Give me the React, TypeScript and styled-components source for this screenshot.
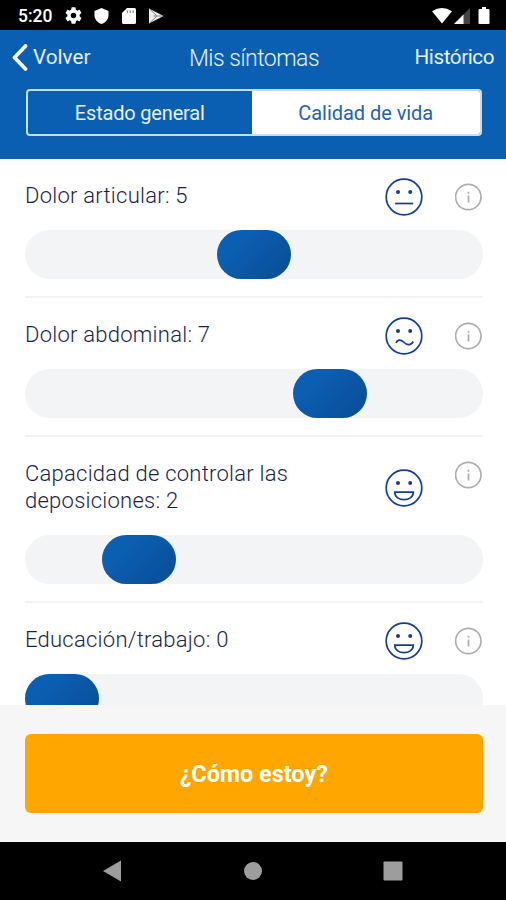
import React from 'react';
import styled, { createGlobalStyle } from 'styled-components';

const GlobalStyle = createGlobalStyle`
  * { box-sizing: border-box; }
  body { margin: 0; background: #000; font-family: Roboto, sans-serif; }
  button { font-family: inherit; border: 0; padding: 0; background: none; }
`;

const Screen = styled.div`
  display: flex;
  flex-direction: column;
  width: 506px;
  height: 900px;
  overflow: hidden;
  background: #fff;
`;

const StatusBar = styled.div`
  display: flex;
  align-items: center;
  flex: none;
  height: 30px;
  padding: 1px 15px 0 18px;
  background: #000;
  color: #fff;
`;

const Clock = styled.span`
  width: 47px;
  font-size: 17.5px;
  font-weight: 500;
  line-height: 20px;
`;

const StatusIcons = styled.div`
  display: flex;
  align-items: center;
  flex: 1;
`;

const StatusGlyph = styled.svg<{ $gap: number }>`
  display: block;
  flex: none;
  margin-right: ${(p) => p.$gap}px;
  fill: currentColor;
`;

const Header = styled.header`
  flex: none;
  height: 129px;
  padding: 0 12px;
  background: #0b5fb2;
  color: #e9f0fb;
`;

const TitleBar = styled.div`
  display: grid;
  grid-template-columns: 1fr auto 1fr;
  align-items: center;
  height: 59px;
  padding-bottom: 6px;
`;

const NavAction = styled.button<{ $end?: boolean }>`
  display: flex;
  align-items: center;
  gap: 5px;
  justify-self: ${(p) => (p.$end ? 'end' : 'start')};
  color: inherit;
  font-size: 20.7px;
  line-height: 26px;
  letter-spacing: ${(p) => (p.$end ? '-0.45px' : '0')};
`;

const Chevron = styled.svg`
  display: block;
  margin-top: 2px;
`;

const Title = styled.h1`
  margin: 4px 0 0 2px;
  font-size: 23px;
  font-weight: 300;
  line-height: 28px;
  letter-spacing: -0.5px;
`;

const Segments = styled.div`
  display: grid;
  grid-template-columns: 223.5px 1fr;
  height: 47px;
  margin: 0 12px 0 14px;
  overflow: hidden;
  border: 2px solid #c9dcf1;
  border-radius: 4px;
`;

const Segment = styled.button<{ $active?: boolean }>`
  padding-top: 1px;
  background: ${(p) => (p.$active ? '#fff' : 'transparent')};
  color: ${(p) => (p.$active ? '#2162b3' : '#e9f0fb')};
  font-size: 20px;
  line-height: 26px;
  letter-spacing: ${(p) => (p.$active ? '-0.05px' : '-0.18px')};
`;

const SymptomList = styled.main`
  flex: none;
  height: 546px;
  padding: 0 23.5px 0 25px;
  overflow: hidden;
`;

const Symptom = styled.section`
  padding: 19px 0 17px;
  border-bottom: 2px solid #f3f3f4;
`;

const SymptomHead = styled.div`
  display: grid;
  grid-template-columns: 1fr 38px 27px;
  column-gap: 32.5px;
  align-items: center;
  padding-right: 0.5px;
`;

const SymptomName = styled.h2`
  margin: 0;
  padding: 4px 0 6.5px;
  color: #1b1f49;
  font-size: 22px;
  font-weight: 300;
  line-height: 27px;
  letter-spacing: 0.25px;
  white-space: pre;
`;

const FaceIcon = styled.svg`
  display: block;
  fill: none;
  stroke: #143d98;
  stroke-width: 1.7;
`;

const InfoIcon = styled.svg`
  display: block;
  align-self: start;
  margin-top: 5px;
  fill: none;
  stroke: #adadad;
  stroke-width: 1.7;
`;

const Track = styled.div`
  height: 49px;
  margin-top: 14px;
  border-radius: 25px;
  background: #f2f4f5;
`;

const Thumb = styled.div<{ $value: number }>`
  width: 74px;
  height: 49px;
  margin-left: ${(p) => p.$value * 38.35}px;
  border-radius: 25px;
  background: linear-gradient(135deg, #0b5fb3 25%, #0a509a 85%);
`;

const Footer = styled.footer`
  flex: none;
  height: 137px;
  padding: 29px 23.5px 0 25px;
  background: #f6f6f6;
`;

const PrimaryButton = styled.button`
  display: block;
  width: 100%;
  height: 79px;
  padding-top: 1px;
  border-radius: 6px;
  background: #ffa600;
  color: #fff;
  font-size: 23.4px;
  font-weight: 700;
`;

const SystemNav = styled.nav`
  display: flex;
  justify-content: space-between;
  align-items: center;
  flex: none;
  height: 58px;
  padding: 0 103px;
  background: #000;
`;

const SystemGlyph = styled.svg`
  display: block;
  fill: #9d9d9d;
`;

type Mood = 'neutral' | 'uneasy' | 'happy';

const mouths: Record<Mood, string> = {
  neutral: 'M10.2 25.5H28.2',
  uneasy: 'M11 26C12.5 22 16 22.5 18.5 25C22 28.5 26 28.5 28.3 24.5',
  happy: 'M9.8 23.2H28.3C28.3 33.2 9.8 33.2 9.8 23.2Z',
};

function Face({ mood }: { mood: Mood }) {
  return (
    <FaceIcon width="38" height="38" viewBox="0 0 38 38">
      <circle cx="19" cy="19" r="17.8" />
      <path d={mouths[mood]} />
      <g fill="#143d98" stroke="none">
        <circle cx="13" cy="14" r="2" />
        <circle cx="25.2" cy="14" r="2" />
      </g>
    </FaceIcon>
  );
}

function Info() {
  return (
    <InfoIcon width="27" height="28" viewBox="0 0 27 28">
      <circle cx="13.3" cy="14" r="12.7" />
      <path d="M13.5 12.5V19.5M13.5 8.8V10.8" />
    </InfoIcon>
  );
}

const symptoms: { name: string; value: number; mood: Mood }[] = [
  { name: 'Dolor articular', value: 5, mood: 'neutral' },
  { name: 'Dolor abdominal', value: 7, mood: 'uneasy' },
  { name: 'Capacidad de controlar las\ndeposiciones', value: 2, mood: 'happy' },
  { name: 'Educación/trabajo', value: 0, mood: 'happy' },
];

export default function App() {
  return (
    <>
      <GlobalStyle />
      <Screen>
        <StatusBar>
          <Clock>5:20</Clock>
          <StatusIcons>
            <StatusGlyph $gap={12} width="17" height="17" viewBox="2 2 20 20">
              <path d="M19.14 12.94c.04-.3.06-.61.06-.94s-.02-.64-.07-.94l2.03-1.58a.49.49 0 0 0 .12-.61l-1.92-3.32a.49.49 0 0 0-.59-.22l-2.39.96a7 7 0 0 0-1.62-.94l-.36-2.54A.48.48 0 0 0 13.92 2.4h-3.84a.47.47 0 0 0-.47.41l-.36 2.54c-.59.24-1.13.57-1.62.94l-2.39-.96a.47.47 0 0 0-.59.22L2.74 8.87a.47.47 0 0 0 .12.61l2.03 1.58a7 7 0 0 0 0 1.88l-2.03 1.58a.49.49 0 0 0-.12.61l1.92 3.32c.12.22.37.29.59.22l2.39-.96c.5.38 1.03.7 1.62.94l.36 2.54c.05.24.24.41.48.41h3.84c.24 0 .44-.17.47-.41l.36-2.54a7 7 0 0 0 1.62-.94l2.39.96c.22.08.47 0 .59-.22l1.92-3.32a.47.47 0 0 0-.12-.61zM12 15.2A3.2 3.2 0 1 1 12 8.8a3.2 3.2 0 0 1 0 6.4z" />
            </StatusGlyph>
            <StatusGlyph $gap={13} width="15" height="16" viewBox="0 0 15 16">
              <path d="M7.5 0 14.5 3V7C14.5 11.5 11.5 14.8 7.5 16 3.5 14.8.5 11.5.5 7V3Z" />
            </StatusGlyph>
            <StatusGlyph $gap={12} width="14" height="16" viewBox="0 0 14 16">
              <path d="M5 0H12.5Q14 0 14 1.5V14.5Q14 16 12.5 16H1.5Q0 16 0 14.5V5Z" />
              <path d="M5.4 2.5V5M8.3 2.5V5M11.2 2.5V5" stroke="#888" strokeWidth="1.2" />
            </StatusGlyph>
            <StatusGlyph $gap={0} width="16" height="16" viewBox="0 0 16 16">
              <path d="M1 .5 15.5 8 1 15.5Z" fill="#eee" />
              <path d="M1.5 1 9 8 1.5 15M5.5 8H15" stroke="#777" strokeWidth=".9" fill="none" />
            </StatusGlyph>
          </StatusIcons>
          <StatusGlyph $gap={2} width="20" height="16" viewBox="0 0 20 16">
            <path d="M0 3.3Q10-3.3 20 3.3L10 15.5Z" />
          </StatusGlyph>
          <StatusGlyph $gap={8} width="16" height="16" viewBox="0 0 16 16">
            <path d="M0 16 16 0V16Z" fill="#444" />
            <path d="M0 16 9.5 6.5V16Z" />
          </StatusGlyph>
          <StatusGlyph $gap={1} width="12" height="17" viewBox="0 0 12 17">
            <path d="M4 0H8V2H10.5Q11.5 2 11.5 3V16Q11.5 17 10.5 17H1.5Q.5 17 .5 16V3Q.5 2 1.5 2H4Z" />
          </StatusGlyph>
        </StatusBar>

        <Header>
          <TitleBar>
            <NavAction>
              <Chevron width="16" height="27" viewBox="0 0 16 27">
                <path d="M13.5 2 2.5 13.5 13.5 25" fill="none" stroke="#fff" strokeWidth="3.8" strokeLinecap="round" strokeLinejoin="round" />
              </Chevron>
              Volver
            </NavAction>
            <Title>Mis síntomas</Title>
            <NavAction $end>Histórico</NavAction>
          </TitleBar>
          <Segments>
            <Segment>Estado general</Segment>
            <Segment $active>Calidad de vida</Segment>
          </Segments>
        </Header>

        <SymptomList>
          {symptoms.map((s) => (
            <Symptom key={s.name}>
              <SymptomHead>
                <SymptomName>{`${s.name}: ${s.value}`}</SymptomName>
                <Face mood={s.mood} />
                <Info />
              </SymptomHead>
              <Track>
                <Thumb $value={s.value} />
              </Track>
            </Symptom>
          ))}
        </SymptomList>

        <Footer>
          <PrimaryButton>¿Cómo estoy?</PrimaryButton>
        </Footer>

        <SystemNav>
          <SystemGlyph width="19" height="22" viewBox="0 0 19 22">
            <path d="M18 .5V21.5L0 11Z" />
          </SystemGlyph>
          <SystemGlyph width="18" height="18" viewBox="0 0 18 18">
            <circle cx="9" cy="9" r="9" />
          </SystemGlyph>
          <SystemGlyph width="20" height="20" viewBox="0 0 20 20">
            <rect x=".5" y=".5" width="19" height="19" rx="1" />
          </SystemGlyph>
        </SystemNav>
      </Screen>
    </>
  );
}
